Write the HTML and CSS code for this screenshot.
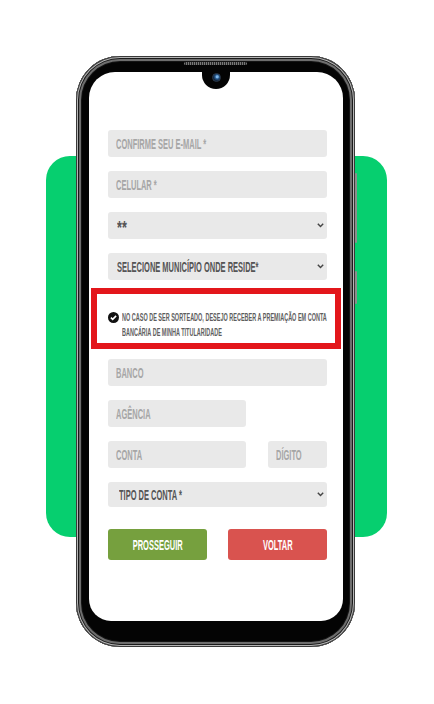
FILE: index.html
```html
<!DOCTYPE html>
<html lang="pt-BR">
<head>
    <meta charset="UTF-8">
    <meta name="viewport" content="width=device-width, initial-scale=1.0">
    <title>Cadastro</title>
    <link rel="stylesheet" href="styles.css">
</head>
<body>
    <div class="stage">
        <div class="green-block"></div>

        <div class="phone">
            <div class="speaker"></div>
            <div class="side-key key-top"></div>
            <div class="side-key key-bottom"></div>

            <div class="screen">
                <div class="notch"><span class="camera"></span></div>

                <form class="form" id="bankForm">
                    <div class="field"><span class="txt">CONFIRME SEU E-MAIL *</span></div>
                    <div class="field"><span class="txt">CELULAR *</span></div>
                    <div class="field select">
                        <span class="txt stars">**</span>
                        <svg class="chevron" width="7" height="5" viewBox="0 0 7 5"><polyline points="0.8,0.8 3.5,3.6 6.2,0.8" /></svg>
                    </div>
                    <div class="field select">
                        <span class="txt">SELECIONE MUNICÍPIO ONDE RESIDE*</span>
                        <svg class="chevron" width="7" height="5" viewBox="0 0 7 5"><polyline points="0.8,0.8 3.5,3.6 6.2,0.8" /></svg>
                    </div>

                    <div class="consent">
                        <svg class="check" width="11" height="11" viewBox="0 0 11 11">
                            <circle cx="5.5" cy="5.5" r="5.5" fill="#111" />
                            <polyline points="2.9,5.6 4.7,7.3 8.1,3.9" fill="none" stroke="#fff" stroke-width="1.6" />
                        </svg>
                        <span class="consent-text">NO CASO DE SER SORTEADO, DESEJO RECEBER A PREMIAÇÃO EM CONTA<br>BANCÁRIA DE MINHA TITULARIDADE</span>
                    </div>

                    <div class="field"><span class="txt">BANCO</span></div>
                    <div class="field short"><span class="txt">AGÊNCIA</span></div>
                    <div class="row">
                        <div class="field short"><span class="txt">CONTA</span></div>
                        <div class="field digit"><span class="txt">DÍGITO</span></div>
                    </div>
                    <div class="field select tipo">
                        <span class="txt">TIPO DE CONTA *</span>
                        <svg class="chevron" width="7" height="5" viewBox="0 0 7 5"><polyline points="0.8,0.8 3.5,3.6 6.2,0.8" /></svg>
                    </div>

                    <div class="actions">
                        <button type="button" class="btn btn-next"><span class="txt">PROSSEGUIR</span></button>
                        <button type="button" class="btn btn-back"><span class="txt">VOLTAR</span></button>
                    </div>
                </form>
            </div>
        </div>
    </div>
</body>
</html>
```

FILE: styles.css
```css
* {
    box-sizing: border-box;
}
body {
    margin: 0;
    background: #fff;
    font-family: "Liberation Sans", Arial, sans-serif;
}
.stage {
    display: grid;
    width: 341px;
    margin: 56px 0 0 46px;
}
.stage > * {
    grid-area: 1 / 1;
}
.green-block {
    background: #06cf6f;
    border-radius: 24px;
    margin-top: 100px;
    height: 381px;
}
.phone {
    position: relative;
    margin-left: 30px;
    width: 279px;
    height: 591px;
    background: #040404;
    border-radius: 44px;
    padding: 16px 12px 26px 13px;
    box-shadow:
        inset 0 0 0 1px #3a3a3a,
        inset 0 0 0 2px #b5b5b5,
        inset 0 0 0 3px #1a1a1a,
        inset 0 0 0 5px #6e6e6e,
        inset 0 0 0 6px #141414;
}
.speaker {
    position: absolute;
    top: 6px;
    left: 108px;
    width: 63px;
    height: 3px;
    border-radius: 2px;
    background: repeating-linear-gradient(90deg, #777 0 1px, #2a2a2a 1px 2px);
}
.side-key {
    position: absolute;
    right: -2px;
    width: 2px;
    background: #8c8c8c;
    border-radius: 1px;
}
.key-top {
    top: 117px;
    height: 70px;
}
.key-bottom {
    top: 215px;
    height: 33px;
}
.screen {
    height: 100%;
    background: #fff;
    border-radius: 26px 26px 22px 22px;
    display: flex;
    flex-direction: column;
    align-items: center;
}
.notch {
    width: 28px;
    height: 17px;
    background: #040404;
    border-radius: 0 0 14px 14px;
    display: flex;
    justify-content: center;
    padding-top: 1px;
}
.camera {
    width: 9px;
    height: 9px;
    border-radius: 50%;
    border: 1px solid #2b3a4d;
    background: radial-gradient(circle at 60% 40%, #7fb6e8 0 1px, #2a5d92 2px, #10233a 4px);
}
.form {
    align-self: stretch;
    margin: 41px 0 0;
    padding: 0 16px 0 19px;
    display: flex;
    flex-direction: column;
    gap: 14px;
}
.txt {
    display: inline-block;
    white-space: nowrap;
    transform: scaleX(0.535);
    transform-origin: left center;
}
.field {
    height: 27px;
    background: #e9e9e9;
    border-radius: 3px;
    padding: 0 8px;
    display: flex;
    align-items: center;
    font-size: 14px;
    font-weight: bold;
    color: #a6a6a6;
    overflow: hidden;
}
.field.select {
    color: #555;
    padding: 0 3px 0 9px;
}
.field.select .txt {
    flex: 1;
    width: 0;
}
.field .stars {
    font-size: 18px;
    padding-top: 6px;
    transform: scaleX(0.7);
}
.chevron {
    flex: none;
    fill: none;
    stroke: #444;
    stroke-width: 1.4;
}
.field.short {
    width: 138px;
}
.field.digit {
    width: 59px;
}
.field.tipo {
    height: 25px;
    padding-left: 11px;
}
.row {
    display: flex;
    justify-content: space-between;
}
.consent {
    margin: -6px -14px -4px -17px;
    height: 61px;
    border: 6px solid #e3161b;
    background: #fff;
    padding: 16px 4px 0 11px;
    display: flex;
    align-items: flex-start;
    gap: 3px;
}
.check {
    flex: none;
    margin-top: 2px;
}
.consent-text {
    display: inline-block;
    white-space: nowrap;
    font-size: 10px;
    font-weight: bold;
    line-height: 15px;
    color: #5e5e5e;
    transform: scaleX(0.55);
    transform-origin: left top;
}
.actions {
    display: flex;
    justify-content: space-between;
    margin-top: 8px;
}
.btn {
    width: 99px;
    height: 31px;
    border: none;
    border-radius: 3px;
    color: #fff;
    font-family: inherit;
    font-size: 14px;
    font-weight: bold;
    cursor: pointer;
    padding: 0;
}
.btn .txt {
    transform-origin: center;
}
.btn-next {
    background: #76a03e;
}
.btn-back {
    background: #d9534f;
}
.btn:hover {
    opacity: 0.9;
}
```
